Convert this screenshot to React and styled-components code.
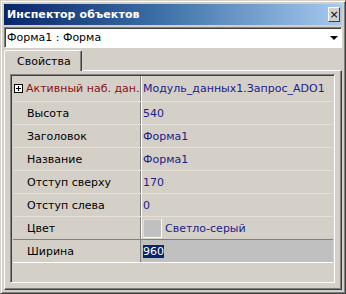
import React from "react";
import styled, { createGlobalStyle } from "styled-components";

const GlobalStyle = createGlobalStyle`
  html, body {
    margin: 0;
    padding: 0;
    background: #d4d0c8;
  }
  body {
    font-family: Tahoma, "DejaVu Sans", "Liberation Sans", sans-serif;
  }
`;

const Window = styled.div`
  box-sizing: border-box;
  width: 346px;
  height: 294px;
  display: flex;
  flex-direction: column;
  padding: 3px;
  background: #d4d0c8;
  border: 1px solid;
  border-color: #d4d0c8 #404040 #404040 #d4d0c8;
  box-shadow: inset 1px 1px #ffffff, inset -1px -1px #808080;
`;

const TitleBar = styled.div`
  height: 21px;
  display: flex;
  align-items: center;
  justify-content: space-between;
  padding: 0 2px 0 3px;
  background: linear-gradient(90deg, #0a246a 0%, #3a6ea5 45%, #a6caf0 100%);
`;

const Title = styled.span`
  color: #ffffff;
  font-size: 11px;
  font-weight: bold;
  letter-spacing: 0.1px;
`;

const CloseButton = styled.div`
  box-sizing: border-box;
  width: 12px;
  height: 15px;
  display: flex;
  align-items: center;
  justify-content: center;
  background: #d4d0c8;
  border: 1px solid;
  border-color: #ffffff #404040 #404040 #ffffff;
  color: #000;
  font-family: "DejaVu Sans", sans-serif;
  font-size: 11px;
  line-height: 1;
`;

const Combo = styled.div`
  box-sizing: border-box;
  margin-top: 2px;
  height: 21px;
  display: flex;
  align-items: center;
  background: #ffffff;
  border: 1px solid;
  border-color: #808080 #ffffff #ffffff #808080;
  box-shadow: inset 1px 1px #404040;
`;

const ComboText = styled.span`
  flex: 1;
  padding-left: 2px;
  font-size: 11px;
  color: #000;
`;

const ComboArrow = styled.div`
  width: 15px;
  height: 100%;
  display: flex;
  align-items: center;
  justify-content: center;
  &::after {
    content: "";
    border-left: 4px solid transparent;
    border-right: 4px solid transparent;
    border-top: 4px solid #000;
  }
`;

const TabRow = styled.div`
  margin-top: 2px;
  height: 20px;
  display: flex;
  align-items: flex-end;
  position: relative;
  z-index: 1;
`;

const Tab = styled.div`
  box-sizing: border-box;
  width: 78px;
  height: 21px;
  margin-bottom: -1px;
  padding-left: 12px;
  display: flex;
  align-items: center;
  background: #d4d0c8;
  border: 1px solid;
  border-bottom: none;
  border-color: #ffffff #404040 transparent #ffffff;
  box-shadow: inset -1px 0 #808080;
  border-radius: 2px 2px 0 0;
  font-size: 11px;
  color: #000;
`;

const Panel = styled.div`
  flex: 1;
  padding: 3px 6px 6px 5px;
  display: flex;
  border: 1px solid;
  border-color: #ffffff #404040 #404040 #ffffff;
  box-shadow: inset -1px -1px #808080;
`;

const Grid = styled.div`
  flex: 1;
  display: flex;
  flex-direction: column;
  border: 1px solid;
  border-color: #808080 #ffffff #ffffff #808080;
  box-shadow: inset 1px 1px #404040;
  padding: 1px 0 0 2px;
`;

const Row = styled.div`
  display: grid;
  grid-template-columns: 128px 1fr;
  height: ${(p) => (p.$first ? "25px" : "22px")};
  border-bottom: 1px solid ${(p) => (p.$selected ? "#ffffff" : "#e4e1da")};
  border-top: ${(p) => (p.$selected ? "1px solid #808080" : "none")};
  margin-top: ${(p) => (p.$selected ? "-1px" : "0")};
  margin-right: 1px;
`;

const Name = styled.div`
  display: flex;
  align-items: center;
  padding-left: ${(p) => (p.$expandable ? "1px" : "14px")};
  border-right: 1px solid #808080;
  box-shadow: 1px 0 #ffffff;
  font-size: 11px;
  color: ${(p) => (p.$accent ? "#8b1010" : "#000")};
  white-space: nowrap;
`;

const Plus = styled.span`
  box-sizing: border-box;
  width: 9px;
  height: 9px;
  margin-right: 3px;
  border: 1px solid #000;
  background: #fff;
  position: relative;
  &::before,
  &::after {
    content: "";
    position: absolute;
    background: #000;
  }
  &::before {
    left: 1px;
    top: 3px;
    width: 5px;
    height: 1px;
  }
  &::after {
    left: 3px;
    top: 1px;
    width: 1px;
    height: 5px;
  }
`;

const Value = styled.div`
  display: flex;
  align-items: center;
  padding-left: 2px;
  font-size: 11px;
  color: #20208a;
  background: ${(p) => (p.$selected ? "#c0c0c0" : "transparent")};
  white-space: nowrap;
  overflow: hidden;
`;

const Swatch = styled.span`
  box-sizing: border-box;
  width: 19px;
  height: 19px;
  margin-right: 3px;
  background: #c0c0c0;
  border: 1px solid;
  border-color: #dcdcdc #ffffff #ffffff #dcdcdc;
`;

const Highlight = styled.span`
  background: #0a246a;
  color: #ffffff;
`;

const rows = [
  { name: "Активный наб. дан.", value: "Модуль_данных1.Запрос_ADO1", accent: true },
  { name: "Высота", value: "540" },
  { name: "Заголовок", value: "Форма1" },
  { name: "Название", value: "Форма1" },
  { name: "Отступ сверху", value: "170" },
  { name: "Отступ слева", value: "0" },
  { name: "Цвет", value: "Светло-серый", swatch: true },
  { name: "Ширина", value: "960", selected: true },
];

export default function App() {
  return (
    <>
      <GlobalStyle />
      <Window>
        <TitleBar>
          <Title>Инспектор объектов</Title>
          <CloseButton>×</CloseButton>
        </TitleBar>
        <Combo>
          <ComboText>Форма1 : Форма</ComboText>
          <ComboArrow />
        </Combo>
        <TabRow>
          <Tab>Свойства</Tab>
        </TabRow>
        <Panel>
          <Grid>
            {rows.map((r, i) => (
              <Row key={r.name} $selected={r.selected} $first={i === 0}>
                <Name $accent={r.accent} $expandable={r.accent}>
                  {r.accent && <Plus />}
                  {r.name}
                </Name>
                <Value $selected={r.selected}>
                  {r.swatch && <Swatch />}
                  {r.selected ? <Highlight>{r.value}</Highlight> : r.value}
                </Value>
              </Row>
            ))}
          </Grid>
        </Panel>
      </Window>
    </>
  );
}
